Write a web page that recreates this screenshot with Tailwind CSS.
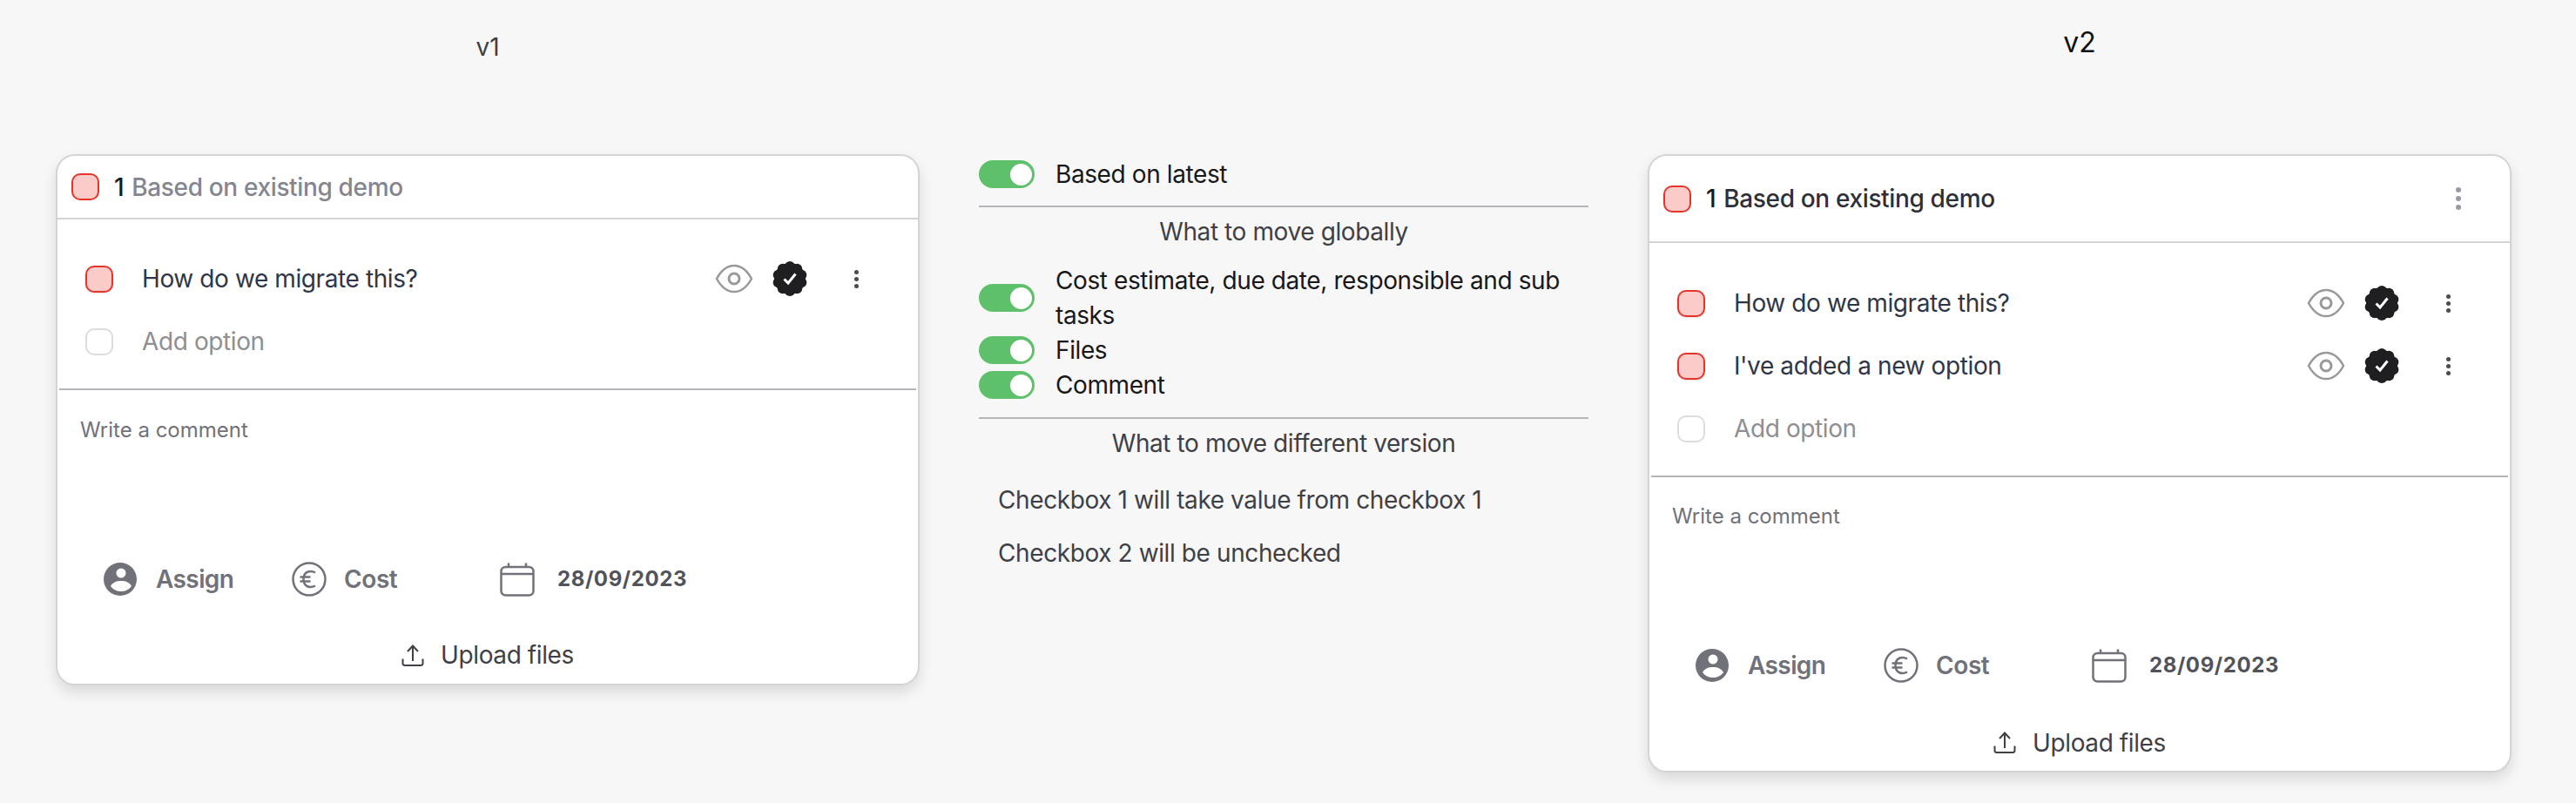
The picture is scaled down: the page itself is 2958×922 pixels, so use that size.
<!DOCTYPE html>
<html lang="en">
<head>
  <meta charset="UTF-8">
  <title>Migration versions</title>
  <script src="https://cdn.jsdelivr.net/npm/@tailwindcss/browser@4"></script>
</head>
<body class="bg-[#f7f7f7] font-['Inter',sans-serif] w-[2958px] h-[922px] overflow-hidden">

  <!-- shared icons -->
  <svg class="hidden">
    <defs>
      <symbol id="eye" viewBox="0 0 44 34">
        <path d="M2 17C8 6 15 2 22 2C29 2 36 6 42 17C36 28 29 32 22 32C15 32 8 28 2 17Z" fill="none" stroke="#999" stroke-width="2.5"/>
        <circle cx="22" cy="17" r="6" fill="none" stroke="#999" stroke-width="3"/>
      </symbol>
      <symbol id="badge" viewBox="0 0 40 40">
        <g fill="#1f1f21">
          <circle cx="20" cy="20" r="18"/>
          <circle cx="20" cy="6" r="6"/><circle cx="28.23" cy="8.67" r="6"/><circle cx="33.31" cy="15.67" r="6"/><circle cx="33.31" cy="24.33" r="6"/><circle cx="28.23" cy="31.33" r="6"/>
          <circle cx="20" cy="34" r="6"/><circle cx="11.77" cy="31.33" r="6"/><circle cx="6.69" cy="24.33" r="6"/><circle cx="6.69" cy="15.67" r="6"/><circle cx="11.77" cy="8.67" r="6"/>
        </g>
        <path d="M13.5 20.5L18 25L26.5 14.5" fill="none" stroke="#fff" stroke-width="3"/>
      </symbol>
      <symbol id="user" viewBox="0 0 38 38">
        <circle cx="19" cy="19" r="19" fill="#71717a"/>
        <circle cx="20" cy="12" r="5.5" fill="#fff"/>
        <path d="M8 27C11 22 15 21 20 21C25 21 29 22 32 27C29 31 25 33 20 33C15 33 11 31 8 27Z" fill="#fff"/>
      </symbol>
      <symbol id="euro" viewBox="0 0 40 40">
        <circle cx="20" cy="20" r="18.5" fill="none" stroke="#71717a" stroke-width="2.5"/>
        <path d="M27 12.5C21 9 13.5 11.5 13.5 20C13.5 28.5 21 31 27 27.5M9.5 17.5H21.5M9.5 22.5H21.5" fill="none" stroke="#71717a" stroke-width="2.5"/>
      </symbol>
      <symbol id="calendar" viewBox="0 0 40 39">
        <rect x="1.5" y="5" width="37" height="32.5" rx="5" fill="none" stroke="#71717a" stroke-width="2.5"/>
        <path d="M1.5 13H38.5M10 0.5V5M30 0.5V5" fill="none" stroke="#71717a" stroke-width="2.5"/>
      </symbol>
      <symbol id="upload" viewBox="0 0 26 25">
        <path d="M1.5 16.5V21.5C1.5 23 2.5 24 4 24H22C23.5 24 24.5 23 24.5 21.5V16.5M13 19V2M7 8L13 1.5L19 8" fill="none" stroke="#3f3f46" stroke-width="2"/>
      </symbol>
    </defs>
  </svg>

  <div class="flex items-start pl-[64px]">

    <!-- v1 -->
    <section class="w-[992px] shrink-0">
      <div class="h-[177px] pt-[37px] text-center text-[28px] leading-[34px] text-[#3f3f46]">v1</div>
      <div class="bg-white border-2 border-[#d4d4d8] rounded-[22px] shadow-[0_8px_16px_rgba(0,0,0,0.12)]">
        <div class="h-[73px] flex items-center pl-[16px] border-b-2 border-[#d4d4d8] text-[28px] font-medium tracking-[-0.35px]">
          <div class="w-[32px] h-[31px] rounded-[10px] border-2 border-[#e5352b] bg-[#fbcbca] shrink-0"></div>
          <span class="ml-[17px] text-[#18181b]">1</span>
          <span class="ml-[9px] text-[#85858f]">Based on existing demo</span>
        </div>
        <div class="pt-[32px] pb-[18px] text-[28px] tracking-[-0.4px]">
          <div class="h-[72px] flex items-center pl-[32px] pr-[68px]">
            <div class="w-[32px] h-[31px] rounded-[10px] border-2 border-[#e5352b] bg-[#fbcbca] shadow-sm shrink-0"></div>
            <span class="ml-[33px] text-[#2f3648]">How do we migrate this?</span>
            <svg class="ml-auto w-[44px] h-[34px]"><use href="#eye"/></svg>
            <svg class="ml-[22px] w-[40px] h-[40px]"><use href="#badge"/></svg>
            <div class="ml-[54px] flex flex-col gap-[3px]">
              <span class="w-[5px] h-[5px] rounded-full bg-[#4a4a50]"></span>
              <span class="w-[5px] h-[5px] rounded-full bg-[#4a4a50]"></span>
              <span class="w-[5px] h-[5px] rounded-full bg-[#4a4a50]"></span>
            </div>
          </div>
          <div class="h-[72px] flex items-center pl-[32px]">
            <div class="w-[32px] h-[31px] rounded-[10px] border-2 border-[#dcdcdc] bg-white shrink-0"></div>
            <span class="ml-[33px] text-[#8e8e93]">Add option</span>
          </div>
        </div>
        <div class="mx-[2px] border-t-2 border-[#b4b4bb]"></div>
        <div class="pt-[31px] pl-[26px] text-[24px] leading-[30px] text-[#71717a]">Write a comment</div>
        <div class="mt-[136px] h-[40px] flex items-center pl-[53px]">
          <svg class="w-[38px] h-[38px]"><use href="#user"/></svg>
          <span class="ml-[22px] w-[156px] text-[28px] font-semibold tracking-[-0.6px] text-[#71717a]">Assign</span>
          <svg class="w-[40px] h-[40px]"><use href="#euro"/></svg>
          <span class="ml-[20px] w-[179px] text-[28px] font-semibold tracking-[-0.4px] text-[#71717a]">Cost</span>
          <svg class="w-[40px] h-[39px]"><use href="#calendar"/></svg>
          <span class="ml-[26px] text-[24px] font-bold tracking-[0.6px] text-[#52525b]">28/09/2023</span>
        </div>
        <div class="mt-[50px] pb-[16px] flex items-center justify-center gap-[19px] h-[50px]">
          <svg class="w-[26px] h-[25px]"><use href="#upload"/></svg>
          <span class="text-[28px] tracking-[-0.4px] text-[#3f3f46]">Upload files</span>
        </div>
      </div>
    </section>

    <!-- settings in the middle -->
    <section class="w-[700px] shrink-0 ml-[68px] pt-[184px] text-[28px] leading-[40px] tracking-[-0.4px] text-[#18181b]">
      <div class="flex items-center gap-[24px] h-[32px]">
        <div class="w-[64px] h-[32px] rounded-full bg-[#5fc06c] flex justify-end items-center pr-[3px] shrink-0"><span class="w-[25px] h-[25px] rounded-full bg-white"></span></div>
        <span>Based on latest</span>
      </div>
      <div class="mt-[20px] border-t-2 border-[#b4b4bb]"></div>
      <div class="mt-[8px] text-center text-[#3f3f46]">What to move globally</div>
      <div class="mt-[16px] flex items-center gap-[24px]">
        <div class="w-[64px] h-[32px] rounded-full bg-[#5fc06c] flex justify-end items-center pr-[3px] shrink-0"><span class="w-[25px] h-[25px] rounded-full bg-white"></span></div>
        <span>Cost estimate, due date, responsible and sub tasks</span>
      </div>
      <div class="flex items-center gap-[24px]">
        <div class="w-[64px] h-[32px] rounded-full bg-[#5fc06c] flex justify-end items-center pr-[3px] shrink-0"><span class="w-[25px] h-[25px] rounded-full bg-white"></span></div>
        <span>Files</span>
      </div>
      <div class="flex items-center gap-[24px]">
        <div class="w-[64px] h-[32px] rounded-full bg-[#5fc06c] flex justify-end items-center pr-[3px] shrink-0"><span class="w-[25px] h-[25px] rounded-full bg-white"></span></div>
        <span>Comment</span>
      </div>
      <div class="mt-[17px] border-t-2 border-[#b4b4bb]"></div>
      <div class="mt-[8px] text-center text-[#3f3f46]">What to move different version</div>
      <div class="mt-[25px] pl-[22px] text-[#3f3f46]">Checkbox 1 will take value from checkbox 1</div>
      <div class="mt-[21px] pl-[22px] text-[#3f3f46]">Checkbox 2 will be unchecked</div>
    </section>

    <!-- v2 -->
    <section class="w-[992px] shrink-0 ml-[68px]">
      <div class="h-[177px] pt-[30px] text-center text-[32px] leading-[38px] text-[#111]">v2</div>
      <div class="bg-white border-2 border-[#d4d4d8] rounded-[22px] shadow-[0_8px_16px_rgba(0,0,0,0.12)]">
        <div class="h-[100px] flex items-center pl-[16px] pr-[56px] border-b-2 border-[#d4d4d8] text-[28px] font-medium tracking-[-0.35px]">
          <div class="w-[32px] h-[31px] rounded-[10px] border-2 border-[#e5352b] bg-[#fbcbca] shrink-0"></div>
          <span class="ml-[17px] text-[#18181b]">1</span>
          <span class="ml-[9px] text-[#2f2f36]">Based on existing demo</span>
          <div class="ml-auto flex flex-col gap-[4px]">
            <span class="w-[6px] h-[6px] rounded-full bg-[#9a9aa5]"></span>
            <span class="w-[6px] h-[6px] rounded-full bg-[#9a9aa5]"></span>
            <span class="w-[6px] h-[6px] rounded-full bg-[#9a9aa5]"></span>
          </div>
        </div>
        <div class="pt-[33px] pb-[18px] text-[28px] tracking-[-0.4px]">
          <div class="h-[72px] flex items-center pl-[32px] pr-[68px]">
            <div class="w-[32px] h-[31px] rounded-[10px] border-2 border-[#e5352b] bg-[#fbcbca] shadow-sm shrink-0"></div>
            <span class="ml-[33px] text-[#2f3648]">How do we migrate this?</span>
            <svg class="ml-auto w-[44px] h-[34px]"><use href="#eye"/></svg>
            <svg class="ml-[22px] w-[40px] h-[40px]"><use href="#badge"/></svg>
            <div class="ml-[54px] flex flex-col gap-[3px]">
              <span class="w-[5px] h-[5px] rounded-full bg-[#4a4a50]"></span>
              <span class="w-[5px] h-[5px] rounded-full bg-[#4a4a50]"></span>
              <span class="w-[5px] h-[5px] rounded-full bg-[#4a4a50]"></span>
            </div>
          </div>
          <div class="h-[72px] flex items-center pl-[32px] pr-[68px]">
            <div class="w-[32px] h-[31px] rounded-[10px] border-2 border-[#e5352b] bg-[#fbcbca] shadow-sm shrink-0"></div>
            <span class="ml-[33px] text-[#2f3648]">I've added a new option</span>
            <svg class="ml-auto w-[44px] h-[34px]"><use href="#eye"/></svg>
            <svg class="ml-[22px] w-[40px] h-[40px]"><use href="#badge"/></svg>
            <div class="ml-[54px] flex flex-col gap-[3px]">
              <span class="w-[5px] h-[5px] rounded-full bg-[#4a4a50]"></span>
              <span class="w-[5px] h-[5px] rounded-full bg-[#4a4a50]"></span>
              <span class="w-[5px] h-[5px] rounded-full bg-[#4a4a50]"></span>
            </div>
          </div>
          <div class="h-[72px] flex items-center pl-[32px]">
            <div class="w-[32px] h-[31px] rounded-[10px] border-2 border-[#dcdcdc] bg-white shrink-0"></div>
            <span class="ml-[33px] text-[#8e8e93]">Add option</span>
          </div>
        </div>
        <div class="mx-[2px] border-t-2 border-[#b4b4bb]"></div>
        <div class="pt-[30px] pl-[26px] text-[24px] leading-[30px] text-[#71717a]">Write a comment</div>
        <div class="mt-[136px] h-[40px] flex items-center pl-[53px]">
          <svg class="w-[38px] h-[38px]"><use href="#user"/></svg>
          <span class="ml-[22px] w-[156px] text-[28px] font-semibold tracking-[-0.6px] text-[#71717a]">Assign</span>
          <svg class="w-[40px] h-[40px]"><use href="#euro"/></svg>
          <span class="ml-[20px] w-[179px] text-[28px] font-semibold tracking-[-0.4px] text-[#71717a]">Cost</span>
          <svg class="w-[40px] h-[39px]"><use href="#calendar"/></svg>
          <span class="ml-[26px] text-[24px] font-bold tracking-[0.6px] text-[#52525b]">28/09/2023</span>
        </div>
        <div class="mt-[51px] pb-[15px] flex items-center justify-center gap-[19px] h-[50px]">
          <svg class="w-[26px] h-[25px]"><use href="#upload"/></svg>
          <span class="text-[28px] tracking-[-0.4px] text-[#3f3f46]">Upload files</span>
        </div>
      </div>
    </section>
  </div>
</body>
</html>
